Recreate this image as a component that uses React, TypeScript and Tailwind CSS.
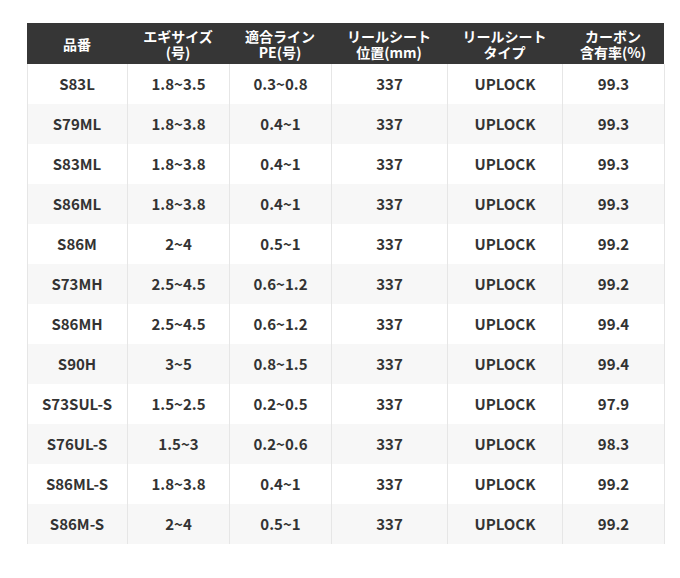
import React from "react";

const rows = [
  ["S83L", "1.8~3.5", "0.3~0.8", "337", "UPLOCK", "99.3"],
  ["S79ML", "1.8~3.8", "0.4~1", "337", "UPLOCK", "99.3"],
  ["S83ML", "1.8~3.8", "0.4~1", "337", "UPLOCK", "99.3"],
  ["S86ML", "1.8~3.8", "0.4~1", "337", "UPLOCK", "99.3"],
  ["S86M", "2~4", "0.5~1", "337", "UPLOCK", "99.2"],
  ["S73MH", "2.5~4.5", "0.6~1.2", "337", "UPLOCK", "99.2"],
  ["S86MH", "2.5~4.5", "0.6~1.2", "337", "UPLOCK", "99.4"],
  ["S90H", "3~5", "0.8~1.5", "337", "UPLOCK", "99.4"],
  ["S73SUL-S", "1.5~2.5", "0.2~0.5", "337", "UPLOCK", "97.9"],
  ["S76UL-S", "1.5~3", "0.2~0.6", "337", "UPLOCK", "98.3"],
  ["S86ML-S", "1.8~3.8", "0.4~1", "337", "UPLOCK", "99.2"],
  ["S86M-S", "2~4", "0.5~1", "337", "UPLOCK", "99.2"],
];

const headers: string[][] = [
  ["品番"],
  ["エギサイズ", "(号)"],
  ["適合ライン", "PE(号)"],
  ["リールシート", "位置(mm)"],
  ["リールシート", "タイプ"],
  ["カーボン", "含有率(%)"],
];

const cols = "grid grid-cols-[100px_102px_102px_116px_115px_102px]";

export default function App() {
  return (
    <div
      className="w-[680px] h-[578px] bg-white pt-[23px] pl-[27px]"
      style={{ fontFamily: '"Noto Sans CJK JP", "Noto Sans", sans-serif' }}
    >
      <div className="w-[637px]">
        <div className={`${cols} h-[41px] bg-[#363636] text-white font-bold text-[14px] leading-[16px]`}>
          {headers.map((h, i) => (
            <div key={i} className="flex flex-col items-center justify-center pt-[1px]">
              {h.map((t, j) => (
                <span key={j}>{t}</span>
              ))}
            </div>
          ))}
        </div>
        {rows.map((r, i) => (
          <div
            key={i}
            className={`${cols} h-[40px] text-[#333333] font-bold text-[15px] border-l border-[#e6e6e6] ${
              i % 2 === 1 ? "bg-[#f7f7f7]" : "bg-white"
            }`}
          >
            {r.map((c, j) => (
              <div
                key={j}
                className={`flex items-center justify-center border-r border-[#e6e6e6] ${j === 0 ? "-ml-[1px]" : ""}`}
              >
                {c}
              </div>
            ))}
          </div>
        ))}
      </div>
    </div>
  );
}
